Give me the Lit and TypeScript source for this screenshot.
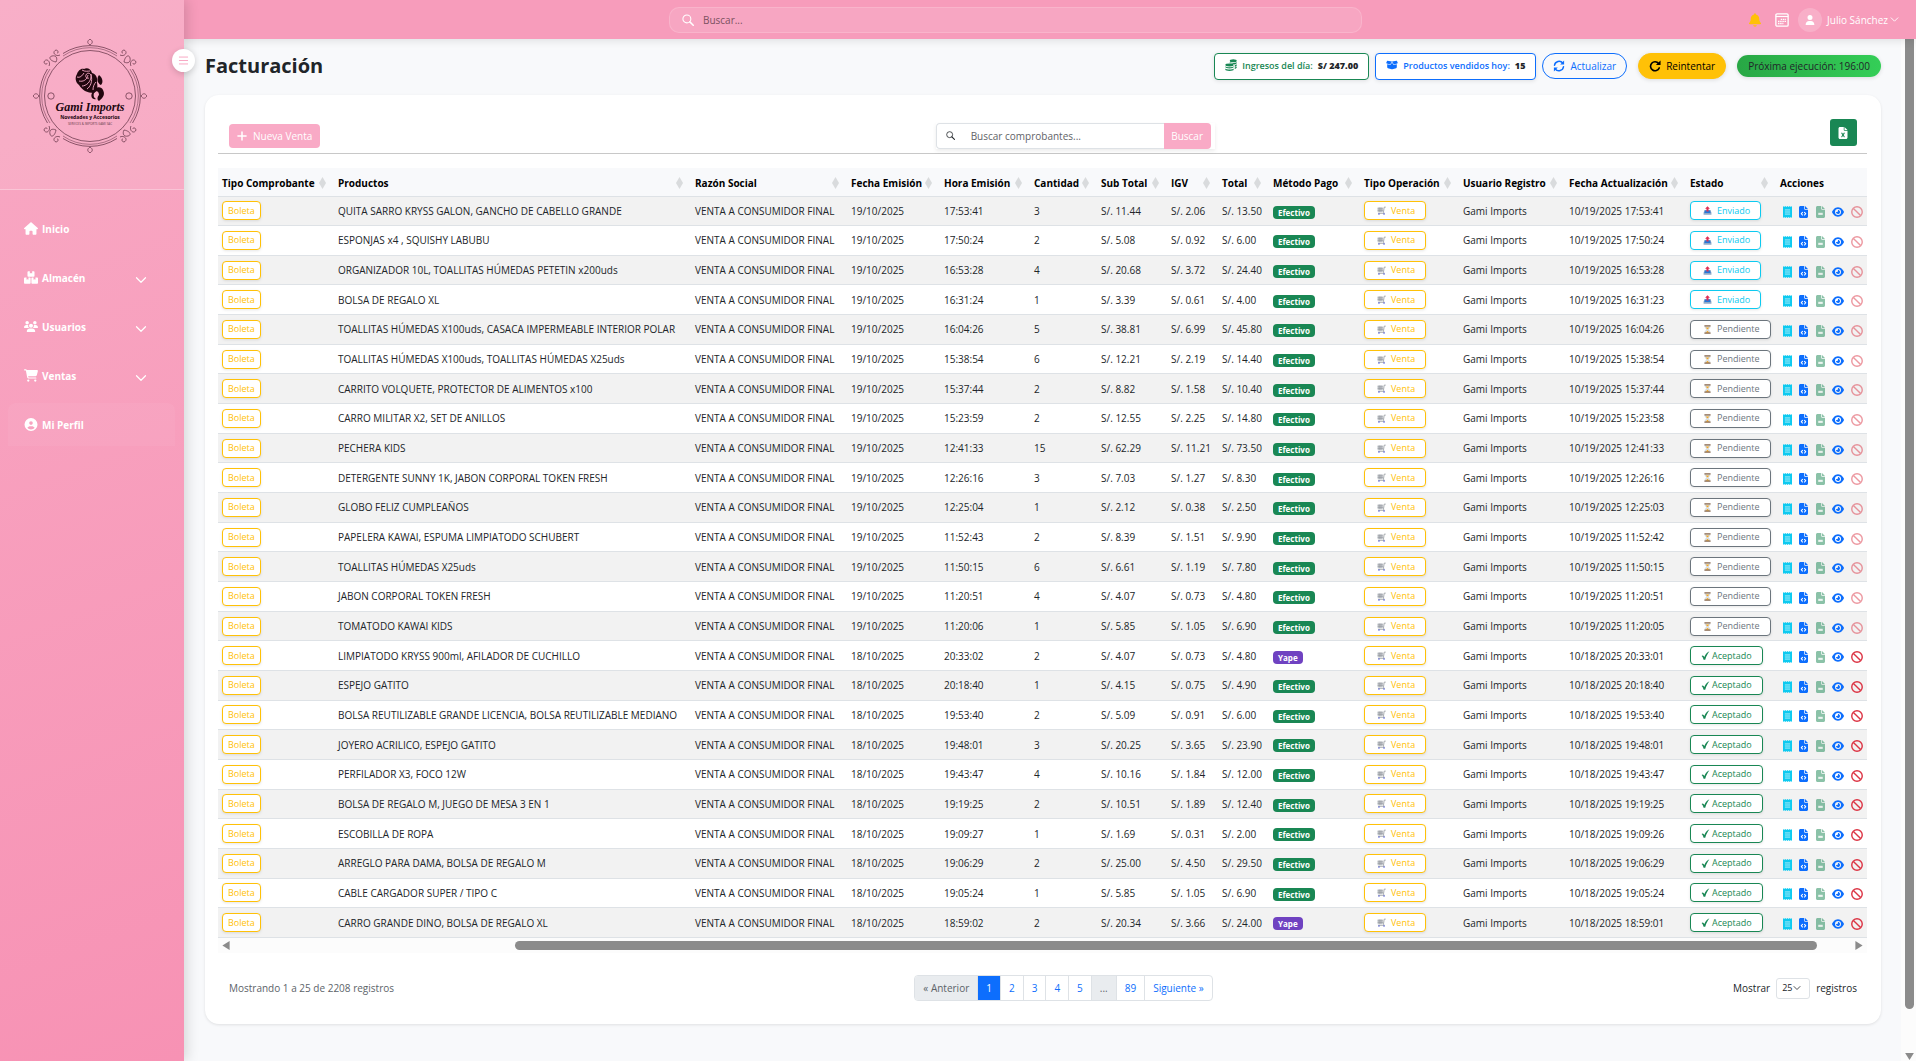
import { LitElement, html, css, svg, nothing, TemplateResult } from "lit";
import { customElement, property } from "lit/decorators.js";

type Estado = "Enviado" | "Pendiente" | "Aceptado";

interface Venta {
  productos: string;
  fecha: string;
  hora: string;
  cantidad: number;
  subTotal: string;
  igv: string;
  total: string;
  pago: "Efectivo" | "Yape";
  actualizado: string;
  estado: Estado;
}

const FILE =
  "M64 0C28.7 0 0 28.7 0 64V448c0 35.3 28.7 64 64 64H320c35.3 0 64-28.7 64-64V160H256c-17.7 0-32-14.3-32-32V0H64zM256 0V128H384L256 0z";

const ICONS: Record<string, { box: string; body: TemplateResult }> = {
  house: {
    box: "0 0 576 512",
    body: svg`<path d="M288 0c8 0 15 3 21 8l256 224c20 18 10 56-21 56h-32v184c0 22-18 40-40 40h-80c-22 0-40-18-40-40V384c0-18-14-32-32-32h-64c-18 0-32 14-32 32v88c0 22-18 40-40 40h-80c-22 0-40-18-40-40V288H32c-31 0-41-38-21-56L267 8c6-5 13-8 21-8z"/>`,
  },
  boxes: {
    box: "0 0 576 512",
    body: svg`<path d="M176 0h64v96l48-24 48 24V0h64c18 0 32 14 32 32v160c0 18-14 32-32 32H176c-18 0-32-14-32-32V32c0-18 14-32 32-32zM32 256h72v96l40-22 40 22v-96h56c18 0 32 14 32 32v192c0 18-14 32-32 32H32c-18 0-32-14-32-32V288c0-18 14-32 32-32zm304 0h56v96l40-22 40 22v-96h72c18 0 32 14 32 32v192c0 18-14 32-32 32H336c-18 0-32-14-32-32V288c0-18 14-32 32-32z"/>`,
  },
  users: {
    box: "0 0 640 512",
    body: svg`<circle cx="144" cy="80" r="80"/><circle cx="496" cy="80" r="80"/><circle cx="320" cy="224" r="92"/><path d="M0 299c0-59 48-107 107-107h43c16 0 31 4 45 10-12 44 1 88 36 118H21c-12 0-21-9-21-21zM409 320c34-29 48-74 36-118 14-6 29-10 45-10h43c59 0 107 48 107 107 0 12-9 21-21 21H409zM128 485c0-74 60-133 133-133h118c74 0 133 60 133 133 0 15-12 27-27 27H155c-15 0-27-12-27-27z"/>`,
  },
  cart: {
    box: "0 0 576 512",
    body: svg`<path d="M0 24C0 10.7 10.7 0 24 0L69.5 0c22 0 41.5 12.8 50.6 32l411 0c26.3 0 45.5 25 38.6 50.4l-41 152.3c-8.5 31.4-37 53.3-69.5 53.3l-288.5 0 5.4 28.5c2.2 11.3 12.1 19.5 23.6 19.5L488 336c13.3 0 24 10.7 24 24s-10.7 24-24 24l-288.3 0c-34.6 0-64.3-24.6-70.7-58.5L77.4 54.5c-.7-3.8-4-6.5-7.9-6.5L24 48C10.7 48 0 37.3 0 24zM128 464a48 48 0 1 1 96 0 48 48 0 1 1 -96 0zm336-48a48 48 0 1 1 0 96 48 48 0 1 1 0-96z"/>`,
  },
  profile: {
    box: "0 0 512 512",
    body: svg`<path d="M399 384.2C376.9 345.8 335.4 320 288 320H224c-47.4 0-88.9 25.8-111 64.2c35.2 39.2 86.2 63.8 143 63.8s107.8-24.7 143-63.8zM0 256a256 256 0 1 1 512 0A256 256 0 1 1 0 256zm256 16a72 72 0 1 0 0-144 72 72 0 1 0 0 144z"/>`,
  },
  chevron: {
    box: "0 0 16 16",
    body: svg`<path d="M2 5l6 6 6-6" fill="none" stroke="currentColor" stroke-width="1.6" stroke-linecap="round" stroke-linejoin="round"/>`,
  },
  menu: {
    box: "0 0 16 16",
    body: svg`<path d="M2 3h12M2 8h12M2 13h12" fill="none" stroke="currentColor" stroke-width="1.4" stroke-linecap="round"/>`,
  },
  search: {
    box: "0 0 16 16",
    body: svg`<circle cx="6.5" cy="6.5" r="5.3" fill="none" stroke="currentColor" stroke-width="1.4"/><path d="M10.5 10.5L15 15" fill="none" stroke="currentColor" stroke-width="2" stroke-linecap="round"/>`,
  },
  bell: {
    box: "0 0 448 512",
    body: svg`<path d="M224 0c-17.7 0-32 14.3-32 32v19.2C119 66 64 130.6 64 208v18.8c0 47-17.3 92.4-48.5 127.6l-7.4 8.3c-8.4 9.4-10.4 22.9-5.3 34.4S19.4 416 32 416H416c12.6 0 24-7.4 29.2-18.9s3.1-25-5.3-34.4l-7.4-8.3C401.3 319.2 384 273.9 384 226.8V208c0-77.4-55-142-128-156.8V32c0-17.7-14.3-32-32-32zm45.3 493.3c12-12 18.7-28.3 18.7-45.3H224 160c0 17 6.7 33.3 18.7 45.3s28.3 18.7 45.3 18.7s33.3-6.7 45.3-18.7z"/>`,
  },
  calendar: {
    box: "0 0 16 16",
    body: svg`<rect x="1" y="1" width="14" height="14" rx="1.4" fill="none" stroke="currentColor" stroke-width="1.5"/><path d="M1 4h14" stroke="currentColor" stroke-width="1.4"/><path d="M6.6 7.2h6M3.4 9.6h9.2M3.4 12h6.2" fill="none" stroke="currentColor" stroke-width="1.5" stroke-dasharray="1.7 .8"/>`,
  },
  user: {
    box: "0 0 448 512",
    body: svg`<path d="M224 256A128 128 0 1 0 224 0a128 128 0 1 0 0 256zm-45.7 48C79.8 304 0 383.8 0 482.3C0 498.7 13.3 512 29.7 512H418.3c16.4 0 29.7-13.3 29.7-29.7C448 383.8 368.2 304 269.7 304H178.3z"/>`,
  },
  coins: {
    box: "0 0 16 16",
    body: svg`<ellipse cx="11" cy="2.4" rx="4.6" ry="2"/><path d="M6.4 4c1 1.700 8 1.700 9.200 0v1.400c0 1-1.400 1.700-3 1.900C11.300 5.900 8.500 5.500 6.400 5.500zM13 8.200c1.200-.2 2.200-.6 2.600-1.200v1.500c0 .9-1.200 1.500-2.600 1.800zM13 11.200c1.200-.2 2.200-.6 2.600-1.200v1.400c0 .9-1.200 1.500-2.600 1.800z"/><ellipse cx="6" cy="8" rx="5.600" ry="1.900"/><path d="M.4 9.500c1.400 1.800 9.800 1.800 11.200 0v1.300c0 2.500-11.200 2.500-11.200 0zM.4 12.500c1.400 1.800 9.800 1.800 11.200 0v1.500c0 2.600-11.200 2.600-11.200 0z"/>`,
  },
  box: {
    box: "0 0 640 512",
    body: svg`<path d="M58.900 42.100c3-6.100 9.600-9.600 16.300-8.700L320 64 564.800 33.400c6.700-.8 13.300 2.700 16.300 8.700l41.700 83.400c9 17.900-.6 39.600-19.800 45.100L439.600 217.300c-13.900 4-28.800-1.900-36.200-14.300L320 64 236.600 203c-7.400 12.400-22.300 18.300-36.200 14.300L37.100 170.600c-19.300-5.500-28.800-27.200-19.800-45.100L58.900 42.100zM321.100 128l54.900 91.400c14.900 24.800 44.600 36.600 72.500 28.600L576 211.600v167c0 22-15 41.200-36.400 46.600l-204.100 51c-10.200 2.600-20.900 2.600-31 0l-204.100-51C79 419.700 64 400.500 64 378.500v-167L191.600 248c27.800 8 57.600-3.800 72.500-28.600L318.900 128h2.200z"/>`,
  },
  sync: {
    box: "0 0 16 16",
    body: svg`<path d="M2 7a6.200 6.200 0 0 1 11-3M14 9a6.200 6.200 0 0 1-11 3" fill="none" stroke="currentColor" stroke-width="2" stroke-linecap="round"/><path d="M14.800.8v5.200h-5.200zM1.200 15.200V10h5.200z"/>`,
  },
  redo: {
    box: "0 0 16 16",
    body: svg`<path d="M12.800 4.600A6 6 0 1 0 13.600 10.600" fill="none" stroke="currentColor" stroke-width="2.200" stroke-linecap="round"/><path d="M15.400.6v6.200H9.200z"/>`,
  },
  plus: {
    box: "0 0 16 16",
    body: svg`<path d="M8 1.500v13M1.500 8h13" stroke="currentColor" stroke-width="2.400" stroke-linecap="round"/>`,
  },
  excel: {
    box: "0 0 384 512",
    body: svg`<path d="${FILE}"/><path d="M140 260l104 156M244 260L140 416" stroke="#198754" stroke-width="44" stroke-linecap="round"/>`,
  },
  receipt: {
    box: "0 0 384 512",
    body: svg`<path d="M0 0l48 40L96 0l48 40L192 0l48 40L288 0l48 40L384 0v512l-48-40-48 40-48-40-48 40-48-40-48 40-48-40-48 40z"/><path d="M80 168h224M80 256h224M80 344h224" stroke="#fff" stroke-opacity=".8" stroke-width="34"/>`,
  },
  code: {
    box: "0 0 384 512",
    body: svg`<path d="${FILE}"/><path d="M150 270l-54 58 54 58M234 270l54 58-54 58" fill="none" stroke="#fff" stroke-width="44" stroke-linecap="round" stroke-linejoin="round"/>`,
  },
  doc: {
    box: "0 0 384 512",
    body: svg`<path d="${FILE}"/><path d="M96 290h192v90H96z" fill="#fff" fill-opacity=".85"/>`,
  },
  eye: {
    box: "0 0 576 512",
    body: svg`<path d="M288 32c-80.800 0-145.500 36.800-192.600 80.600C48.600 156 17.300 208 2.500 243.700c-3.300 7.900-3.300 16.700 0 24.600C17.300 304 48.600 356 95.400 399.400C142.500 443.200 207.200 480 288 480s145.500-36.800 192.600-80.600c46.800-43.500 78.100-95.400 93-131.100c3.300-7.900 3.300-16.700 0-24.600c-14.900-35.700-46.200-87.700-93-131.100C433.500 68.800 368.800 32 288 32zM144 256a144 144 0 1 1 288 0 144 144 0 1 1 -288 0zm144-64c0 35.300-28.700 64-64 64c-7.100 0-13.900-1.200-20.300-3.300c-5.500-1.800-11.900 1.600-11.700 7.400c.3 6.900 1.300 13.800 3.200 20.700c13.700 51.200 66.400 81.600 117.600 67.900s81.600-66.400 67.900-117.600c-11.100-41.500-47.800-69.400-88.600-71.100c-5.800-.2-9.200 6.100-7.400 11.700c2.100 6.400 3.300 13.200 3.300 20.300z"/>`,
  },
  ban: {
    box: "0 0 16 16",
    body: svg`<circle cx="8" cy="8" r="7" fill="none" stroke="currentColor" stroke-width="1.900"/><path d="M3.200 3.200l9.600 9.600" stroke="currentColor" stroke-width="1.900"/>`,
  },
  sort: { box: "0 0 7 12", body: svg`<path d="M3.500 0L7 6 3.500 12 0 6z"/>` },
  trolley: {
    box: "0 0 16 16",
    body: svg`<path d="M1 2.500h9.500v8.500H1z" fill="#c9cdd2"/><path d="M1 5h10M1 8h10M4 2.500V11M7 2.500V11" stroke="#8b9096" stroke-width=".9"/><path d="M15.500 2h-2.700L11.500 11l1.500 2H2" fill="none" stroke="#8b9096" stroke-width="1.300"/><circle cx="3.500" cy="14.300" r="1.400" fill="#4f5bd5"/><circle cx="12.500" cy="14.300" r="1.400" fill="#4f5bd5"/>`,
  },
  outbox: {
    box: "0 0 16 16",
    body: svg`<path d="M2.500 7h11l1.500 5v3.500H1V12z" fill="#8fa9c8"/><path d="M3.500 8h9l1 4.500h-11z" fill="#2577d8"/><path d="M8 .3l4.300 4.700h-2.500v4.700H6.200V5H3.700z" fill="#dd2e54"/>`,
  },
  hourglass: {
    box: "0 0 16 16",
    body: svg`<path d="M3.500 2h9c0 3-1.500 4.500-3.500 6 2 1.500 3.500 3 3.500 6h-9c0-3 1.500-4.500 3.500-6-2-1.500-3.500-3-3.500-6z" fill="#dfe6ea" stroke="#a9b3ba" stroke-width=".6"/><path d="M4.800 4.500h6.400L8 8zM4.500 13.800L8 10l3.500 3.800z" fill="#f5a623"/><path d="M2.500 1.500h11M2.500 14.500h11" stroke="#8a6a4f" stroke-width="2"/>`,
  },
  check: {
    box: "0 0 16 16",
    body: svg`<path d="M1 9c1.800-1.800 3.600-1 5 1.600C8 6 10.500 2.500 15 .6 12 4.500 9.500 9 7.500 15.400H4.600C3.800 12.500 2.800 10.500 1 9z"/>`,
  },
  left: { box: "0 0 8 10", body: svg`<path d="M8 0v10L0 5z"/>` },
  right: { box: "0 0 8 10", body: svg`<path d="M0 0v10l8-5z"/>` },
  down: { box: "0 0 10 8", body: svg`<path d="M0 0h10L5 8z"/>` },
};

const icon = (name: string, cls = "") =>
  html`<svg class="icon ${cls}" viewBox=${ICONS[name].box} aria-hidden="true">${ICONS[name].body}</svg>`;

const fila = (
  productos: string,
  fecha: string,
  hora: string,
  cantidad: number,
  subTotal: string,
  igv: string,
  total: string,
  segundos: string,
  estado: Estado,
  pago: "Efectivo" | "Yape" = "Efectivo"
): Venta => ({
  productos,
  fecha: `${fecha}/10/2025`,
  hora,
  cantidad,
  subTotal,
  igv,
  total,
  pago,
  actualizado: `10/${fecha}/2025 ${segundos}`,
  estado,
});

const VENTAS: Venta[] = [
  fila("QUITA SARRO KRYSS GALON, GANCHO DE CABELLO GRANDE", "19", "17:53:41", 3, "11.44", "2.06", "13.50", "17:53:41", "Enviado"),
  fila("ESPONJAS x4 , SQUISHY LABUBU", "19", "17:50:24", 2, "5.08", "0.92", "6.00", "17:50:24", "Enviado"),
  fila("ORGANIZADOR 10L, TOALLITAS HÚMEDAS PETETIN x200uds", "19", "16:53:28", 4, "20.68", "3.72", "24.40", "16:53:28", "Enviado"),
  fila("BOLSA DE REGALO XL", "19", "16:31:24", 1, "3.39", "0.61", "4.00", "16:31:23", "Enviado"),
  fila("TOALLITAS HÚMEDAS X100uds, CASACA IMPERMEABLE INTERIOR POLAR", "19", "16:04:26", 5, "38.81", "6.99", "45.80", "16:04:26", "Pendiente"),
  fila("TOALLITAS HÚMEDAS X100uds, TOALLITAS HÚMEDAS X25uds", "19", "15:38:54", 6, "12.21", "2.19", "14.40", "15:38:54", "Pendiente"),
  fila("CARRITO VOLQUETE, PROTECTOR DE ALIMENTOS x100", "19", "15:37:44", 2, "8.82", "1.58", "10.40", "15:37:44", "Pendiente"),
  fila("CARRO MILITAR X2, SET DE ANILLOS", "19", "15:23:59", 2, "12.55", "2.25", "14.80", "15:23:58", "Pendiente"),
  fila("PECHERA KIDS", "19", "12:41:33", 15, "62.29", "11.21", "73.50", "12:41:33", "Pendiente"),
  fila("DETERGENTE SUNNY 1K, JABON CORPORAL TOKEN FRESH", "19", "12:26:16", 3, "7.03", "1.27", "8.30", "12:26:16", "Pendiente"),
  fila("GLOBO FELIZ CUMPLEAÑOS", "19", "12:25:04", 1, "2.12", "0.38", "2.50", "12:25:03", "Pendiente"),
  fila("PAPELERA KAWAI, ESPUMA LIMPIATODO SCHUBERT", "19", "11:52:43", 2, "8.39", "1.51", "9.90", "11:52:42", "Pendiente"),
  fila("TOALLITAS HÚMEDAS X25uds", "19", "11:50:15", 6, "6.61", "1.19", "7.80", "11:50:15", "Pendiente"),
  fila("JABON CORPORAL TOKEN FRESH", "19", "11:20:51", 4, "4.07", "0.73", "4.80", "11:20:51", "Pendiente"),
  fila("TOMATODO KAWAI KIDS", "19", "11:20:06", 1, "5.85", "1.05", "6.90", "11:20:05", "Pendiente"),
  fila("LIMPIATODO KRYSS 900ml, AFILADOR DE CUCHILLO", "18", "20:33:02", 2, "4.07", "0.73", "4.80", "20:33:01", "Aceptado", "Yape"),
  fila("ESPEJO GATITO", "18", "20:18:40", 1, "4.15", "0.75", "4.90", "20:18:40", "Aceptado"),
  fila("BOLSA REUTILIZABLE GRANDE LICENCIA, BOLSA REUTILIZABLE MEDIANO", "18", "19:53:40", 2, "5.09", "0.91", "6.00", "19:53:40", "Aceptado"),
  fila("JOYERO ACRILICO, ESPEJO GATITO", "18", "19:48:01", 3, "20.25", "3.65", "23.90", "19:48:01", "Aceptado"),
  fila("PERFILADOR X3, FOCO 12W", "18", "19:43:47", 4, "10.16", "1.84", "12.00", "19:43:47", "Aceptado"),
  fila("BOLSA DE REGALO M, JUEGO DE MESA 3 EN 1", "18", "19:19:25", 2, "10.51", "1.89", "12.40", "19:19:25", "Aceptado"),
  fila("ESCOBILLA DE ROPA", "18", "19:09:27", 1, "1.69", "0.31", "2.00", "19:09:26", "Aceptado"),
  fila("ARREGLO PARA DAMA, BOLSA DE REGALO M", "18", "19:06:29", 2, "25.00", "4.50", "29.50", "19:06:29", "Aceptado"),
  fila("CABLE CARGADOR SUPER / TIPO C", "18", "19:05:24", 1, "5.85", "1.05", "6.90", "19:05:24", "Aceptado"),
  fila("CARRO GRANDE DINO, BOLSA DE REGALO XL", "18", "18:59:02", 2, "20.34", "3.66", "24.00", "18:59:01", "Aceptado", "Yape"),
];

const shared = css`
  :host {
    display: block;
    font-family: "Open Sans", "Noto Sans", sans-serif;
    font-size: 10px;
    line-height: 16px;
    color: #212529;
  }
  *,
  *::before,
  *::after {
    box-sizing: border-box;
  }
  button,
  input,
  select {
    font: inherit;
    margin: 0;
  }
  button {
    cursor: pointer;
  }
  a {
    text-decoration: none;
    color: inherit;
  }
  .icon {
    display: block;
    flex: none;
    fill: currentColor;
    width: 12px;
    height: 12px;
  }
`;

const MENU = [
  { texto: "Inicio", icono: "house", grupo: false },
  { texto: "Almacén", icono: "boxes", grupo: true },
  { texto: "Usuarios", icono: "users", grupo: true },
  { texto: "Ventas", icono: "cart", grupo: true },
  { texto: "Mi Perfil", icono: "profile", grupo: false },
];

@customElement("gami-logo")
class GamiLogo extends LitElement {
  static styles = css`
    :host {
      display: block;
    }
    .logo {
      display: block;
      width: 114px;
      height: 114px;
    }
    .line {
      fill: none;
      stroke: #5b2c3f;
      stroke-width: 0.7;
    }
    .fine {
      stroke-width: 0.6;
      opacity: 0.8;
    }
    .ink {
      fill: #22070f;
    }
    .petal {
      fill: none;
      stroke: #f9abc7;
      stroke-width: 0.9;
    }
    .script {
      font: italic 700 12px "Liberation Serif", serif;
    }
    .tag {
      font: 700 5px "Open Sans", sans-serif;
    }
    .small {
      font: 400 3px "Open Sans", sans-serif;
      opacity: 0.7;
    }
  `;

  render() {
    const corner = svg`<path class="line" d="M-30 41C-34 39-38 43-35 45.500C-33 47-30.500 44-33 42.500M-41 30C-39 34-43 38-45.500 35C-47 33-44 30.500-42.500 33M-34 34c-4-2-7 0-6 4s5 2 6-4"/>`;
    const tip = svg`<path class="line" d="M0-51c-3-2-3-4 0-6 3 2 3 4 0 6z"/>`;
    return html`<svg class="logo" viewBox="-57 -57 114 114" role="img">
      <circle class="line" r="45.500" />
      <path class="line fine" d="M-27 40A48 48 0 0 0 27 40M-27-40A48 48 0 0 1 27-40M40-27A48 48 0 0 1 40 27M-40-27A48 48 0 0 0-40 27" />
      <path class="line" d="M-27 42.500A50.300 50.300 0 0 0 27 42.500M-27-42.500A50.300 50.300 0 0 1 27-42.500M42.500-27A50.300 50.300 0 0 1 42.500 27M-42.500-27A50.300 50.300 0 0 0-42.500 27" />
      ${[0, 90, 180, 270].map((a) => svg`<g transform="rotate(${a})">${tip}${corner}</g>`)}
      <circle class="line" cx="-39" cy="0" r="3.200" />
      <circle class="line" cx="39" cy="0" r="3.200" />
      <g class="ink">
        <path d="M-13-22c-2 3-2 8 2 11 3 5 8 8 15 8 3-2 4-6 3-10 1-5-1-9-5-10-1-4-5-6-8-4-3-1-6 2-7 5z" />
        <path d="M9-21c3 2 5 7 2 10-3-1-5-6-2-10zM2-3c2-6 9-8 11-3 2 4 1 7-4 11-2-1-2-4 0-6 0-4-3-5-5-2-1 3 0 5 2 6-3 1-6-2-4-6z" />
      </g>
      <path class="petal" d="M-13-19c3 1 5-1 7-4M-11-15c4 1 8-1 9-6M-8-10c4 0 9-4 9-10 0-3-4-4-5-1-1 2 1 4 3 3M-3-7c3-2 6-7 4-15M-8-26c3 2 6 1 8 1M3-6c0-3 1-6 3-8" />
      <text class="ink script" x="0" y="15" text-anchor="middle">Gami Imports</text>
      <text class="ink tag" x="0" y="23" text-anchor="middle">Novedades y Accesorios</text>
      <text class="ink small" x="0" y="29" text-anchor="middle">SERVICES &amp; IMPORTS GAMI SAC</text>
    </svg>`;
  }
}

@customElement("app-sidebar")
class AppSidebar extends LitElement {
  static styles = [
    shared,
    css`
      :host {
        position: relative;
        z-index: 3;
        background: linear-gradient(160deg, #f8a9c4 0%, #f792b4 100%);
        box-shadow: 3px 0 12px rgba(0, 0, 0, 0.14);
      }
      .brand {
        display: flex;
        justify-content: center;
        padding: 39px 5px 36px 0;
        border-bottom: 1px solid rgba(255, 255, 255, 0.3);
        background: rgba(255, 255, 255, 0.08);
      }
      .toggle {
        position: absolute;
        top: 49px;
        right: -11px;
        width: 23px;
        height: 23px;
        padding: 0 0 1px;
        border: 0;
        border-radius: 50%;
        background: #fff;
        color: #f8a5c2;
        display: grid;
        place-items: center;
        box-shadow: 0 2px 6px rgba(0, 0, 0, 0.16);
      }
      .toggle .icon {
        width: 11px;
        height: 11px;
      }
      .menu {
        display: flex;
        flex-direction: column;
        gap: 6px;
        padding: 17px 9px 0 8px;
      }
      .item {
        display: flex;
        align-items: center;
        gap: 4px;
        height: 43px;
        padding: 0 28px 0 16px;
        border: 0;
        border-radius: 8px 8px 0 0;
        background: none;
        color: #fff;
        font-weight: 700;
        text-align: left;
      }
      .active {
        background: rgba(255, 255, 255, 0.05);
      }
      .item .glyph {
        width: 14px;
        height: 13px;
      }
      .label {
        flex: 1;
      }
      .item .arrow {
        width: 12px;
        height: 12px;
        margin-top: 5px;
      }
    `,
  ];

  render() {
    return html`
      <div class="brand"><gami-logo></gami-logo></div>
      <button class="toggle" aria-label="Menú">${icon("menu")}</button>
      <nav class="menu">
        ${MENU.map((m) =>
          m.grupo
            ? html`<button class="item">${icon(m.icono, "glyph")}<span class="label">${m.texto}</span>${icon("chevron", "arrow")}</button>`
            : html`<a class="item ${m.texto === "Mi Perfil" ? "active" : ""}" href="#">${icon(m.icono, "glyph")}<span class="label">${m.texto}</span></a>`
        )}
      </nav>
    `;
  }
}

@customElement("app-header")
class AppHeader extends LitElement {
  static styles = [
    shared,
    css`
      :host {
        position: relative;
        z-index: 2;
        display: grid;
        grid-template-columns: 28% 40% 1fr;
        align-items: center;
        height: 39px;
        background: #f79cbb;
        box-shadow: 0 2px 8px rgba(0, 0, 0, 0.1);
      }
      .search {
        grid-column: 2;
        display: flex;
        align-items: center;
        gap: 9px;
        height: 26px;
        padding: 0 12px;
        border: 1px solid rgba(255, 255, 255, 0.16);
        border-radius: 10px;
        background: rgba(255, 255, 255, 0.1);
        color: #fff;
      }
      .search input {
        flex: 1;
        min-width: 0;
        padding: 0;
        border: 0;
        outline: 0;
        background: none;
      }
      .search input::placeholder {
        color: #7b5060;
      }
      .tools {
        display: flex;
        align-items: center;
        justify-content: flex-end;
        padding-right: 17px;
        color: #fff;
      }
      .tool {
        display: flex;
        align-items: center;
        padding: 0;
        border: 0;
        background: none;
        color: inherit;
      }
      .bell {
        color: #ffc107;
        margin-right: 14px;
      }
      .bell .icon {
        height: 14px;
      }
      .cal {
        margin-right: 9px;
      }
      .cal .icon {
        width: 14px;
        height: 14px;
      }
      .avatar {
        display: grid;
        place-items: center;
        width: 24px;
        height: 24px;
        margin-right: 5px;
        border-radius: 50%;
        background: rgba(255, 255, 255, 0.2);
      }
      .avatar .icon {
        width: 10px;
        height: 10px;
      }
      .account {
        font-weight: 500;
      }
      .account .arrow {
        width: 9px;
        height: 9px;
        margin-left: 2px;
      }
    `,
  ];

  render() {
    return html`
      <label class="search">${icon("search")}<input type="search" placeholder="Buscar..." aria-label="Buscar" /></label>
      <div class="tools">
        <button class="tool bell" aria-label="Notificaciones">${icon("bell")}</button>
        <button class="tool cal" aria-label="Calendario">${icon("calendar")}</button>
        <button class="tool account"><span class="avatar">${icon("user")}</span>Julio Sánchez${icon("chevron", "arrow")}</button>
      </div>
    `;
  }
}

const COLUMNAS: { titulo: string; clase: string }[] = [
  { titulo: "Tipo Comprobante", clase: "w116" },
  { titulo: "Productos", clase: "" },
  { titulo: "Razón Social", clase: "w156" },
  { titulo: "Fecha Emisión", clase: "w93" },
  { titulo: "Hora Emisión", clase: "w90" },
  { titulo: "Cantidad", clase: "w67" },
  { titulo: "Sub Total", clase: "w70" },
  { titulo: "IGV", clase: "w51" },
  { titulo: "Total", clase: "w51" },
  { titulo: "Método Pago", clase: "w91" },
  { titulo: "Tipo Operación", clase: "w99" },
  { titulo: "Usuario Registro", clase: "w106" },
  { titulo: "Fecha Actualización", clase: "w121" },
  { titulo: "Estado", clase: "w90" },
  { titulo: "Acciones", clase: "w91" },
];

const ESTADO_ICONO: Record<Estado, string> = { Enviado: "outbox", Pendiente: "hourglass", Aceptado: "check" };

@customElement("ventas-table")
class VentasTable extends LitElement {
  @property({ attribute: false }) rows: Venta[] = [];

  static styles = [
    shared,
    css`
      .table {
        width: 100%;
        height: 770px;
        table-layout: fixed;
        border-collapse: collapse;
      }
      .w116 { width: 116px; }
      .w156 { width: 156px; }
      .w93 { width: 93px; }
      .w90 { width: 90px; }
      .w67 { width: 67px; }
      .w70 { width: 70px; }
      .w51 { width: 51px; }
      .w91 { width: 91px; }
      .w99 { width: 99px; }
      .w106 { width: 106px; }
      .w121 { width: 121px; }
      th {
        height: 28px;
        padding: 2px 8px 0 4px;
        border-bottom: 1px solid #dee2e6;
        background: #f8f9fb;
        color: #000;
        font-weight: 700;
        text-align: left;
      }
      .head {
        display: flex;
        align-items: center;
        justify-content: space-between;
        white-space: nowrap;
      }
      .head .icon {
        width: 7px;
        height: 12px;
        color: #d9dbdd;
      }
      td {
        padding: 0 0 0 4px;
        border-bottom: 1px solid #dee2e6;
        white-space: nowrap;
        color: #212529;
      }
      tbody tr:nth-child(odd) {
        background: #f2f2f2;
      }
      .pill {
        display: inline-flex;
        vertical-align: middle;
        align-items: center;
        gap: 5px;
        height: 19px;
        padding: 0 10px 0 12px;
        border: 1px solid currentColor;
        border-radius: 4px;
        background: #fff;
        font-size: 9px;
        font-weight: 500;
        box-shadow: 0 1px 3px rgba(0, 0, 0, 0.1);
      }
      .pill .icon {
        width: 9px;
        height: 9px;
      }
      .boleta,
      .venta {
        color: #ffc107;
      }
      .boleta {
        padding: 0 5px;
      }
      .Enviado {
        color: #0dcaf0;
      }
      .Pendiente {
        color: #6c757d;
      }
      .Aceptado {
        color: #198754;
        padding: 0 10px;
        gap: 2px;
      }
      .badge {
        display: inline-block;
        vertical-align: middle;
        height: 13px;
        padding: 0 5px;
        border-radius: 4px;
        background: #198754;
        color: #fff;
        font-size: 8px;
        line-height: 13px;
        font-weight: 700;
      }
      .Yape {
        background: #6f42c1;
      }
      .actions {
        display: flex;
        align-items: center;
        justify-content: space-between;
        padding: 3px 4px 0 3px;
      }
      .act {
        padding: 0;
        border: 0;
        background: none;
      }
      .act .narrow {
        width: 9px;
      }
      .cyan { color: #0dcaf0; }
      .blue { color: #0d6efd; }
      .green { color: #198754; opacity: 0.5; }
      .red { color: #dc3545; }
      .off { opacity: 0.5; }
    `,
  ];

  render() {
    return html`
      <table class="table">
        <colgroup>${COLUMNAS.map((c) => html`<col class=${c.clase} />`)}</colgroup>
        <thead>
          <tr>
            ${COLUMNAS.map(
              (c) => html`<th scope="col"><span class="head">${c.titulo}${c.titulo === "Acciones" ? nothing : icon("sort")}</span></th>`
            )}
          </tr>
        </thead>
        <tbody>
          ${this.rows.map(
            (r) => html`<tr>
              <td><span class="pill boleta">Boleta</span></td>
              <td>${r.productos}</td>
              <td>VENTA A CONSUMIDOR FINAL</td>
              <td>${r.fecha}</td>
              <td>${r.hora}</td>
              <td>${r.cantidad}</td>
              <td>S/. ${r.subTotal}</td>
              <td>S/. ${r.igv}</td>
              <td>S/. ${r.total}</td>
              <td><span class="badge ${r.pago}">${r.pago}</span></td>
              <td><span class="pill venta">${icon("trolley")}Venta</span></td>
              <td>Gami Imports</td>
              <td>${r.actualizado}</td>
              <td><span class="pill ${r.estado}">${icon(ESTADO_ICONO[r.estado])}${r.estado}</span></td>
              <td>
                <div class="actions">
                  <button class="act cyan" aria-label="Comprobante">${icon("receipt", "narrow")}</button>
                  <button class="act blue" aria-label="XML">${icon("code", "narrow")}</button>
                  <button class="act green" aria-label="CDR">${icon("doc", "narrow")}</button>
                  <button class="act blue" aria-label="Ver">${icon("eye")}</button>
                  <button class="act red ${r.estado === "Aceptado" ? "" : "off"}" aria-label="Anular">${icon("ban")}</button>
                </div>
              </td>
            </tr>`
          )}
        </tbody>
      </table>
    `;
  }
}

@customElement("app-root")
class AppRoot extends LitElement {
  static styles = [
    shared,
    css`
      .shell {
        display: grid;
        grid-template-columns: 184px minmax(0, 1fr);
        min-height: 100vh;
        background: #f8f9fb;
      }
      .main {
        display: flex;
        flex-direction: column;
      }
      .body {
        flex: 1;
        display: flex;
      }
      .content {
        flex: 1;
        min-width: 0;
        padding: 0 20px 0 21px;
      }
      .vbar {
        display: flex;
        flex-direction: column;
        align-items: center;
        gap: 44px;
        width: 15px;
        padding: 0 0 1px 2px;
        background: #fcfcfc;
        color: #8b8b8b;
      }
      .vthumb {
        flex: 1;
        width: 9px;
        border-radius: 0 0 5px 5px;
        background: #8b8b8b;
      }
      .vbar .icon {
        width: 9px;
        height: 7px;
      }
      .top {
        display: flex;
        align-items: center;
        height: 56px;
        padding-bottom: 2px;
      }
      .title {
        flex: 1;
        margin: 0;
        font-size: 20px;
        line-height: 26px;
        font-weight: 700;
      }
      .stat {
        display: flex;
        align-items: center;
        gap: 5px;
        height: 27px;
        padding: 0 10px;
        border: 1px solid currentColor;
        border-radius: 4px;
        background: #fff;
        font-size: 9px;
        font-weight: 600;
        box-shadow: 0 1px 4px rgba(0, 0, 0, 0.1);
        margin-right: 6px;
      }
      .stat b {
        color: #212529;
      }
      .stat .icon {
        margin-bottom: 2px;
      }
      .income {
        color: #198754;
      }
      .sold {
        color: #0d6efd;
      }
      .round {
        display: flex;
        align-items: center;
        gap: 5px;
        height: 26px;
        padding: 0 10px;
        border: 1px solid #0d6efd;
        border-radius: 13px;
        background: #f8f9fb;
        color: #0d6efd;
        margin-right: 11px;
      }
      .retry {
        border-color: #ffc107;
        background: #ffc107;
        color: #000;
        box-shadow: 0 1px 4px rgba(0, 0, 0, 0.12);
      }
      .next {
        height: 22px;
        padding: 0 11px;
        border-radius: 11px;
        line-height: 22px;
        background: linear-gradient(90deg, #28a745, #34ce57);
        box-shadow: 0 1px 4px rgba(0, 0, 0, 0.12);
      }
      .card {
        padding: 24px 14px 23px 13px;
        border-radius: 14px;
        background: #fff;
        box-shadow: 0 1px 3px rgba(0, 0, 0, 0.1);
      }
      .bar {
        display: flex;
        justify-content: space-between;
        align-items: center;
        height: 35px;
        padding: 0 10px 4px 11px;
        border-bottom: 1px solid #c8c8c8;
        margin-bottom: 14px;
      }
      .new {
        display: flex;
        align-items: center;
        gap: 6px;
        height: 24px;
        margin-top: 3px;
        padding: 0 8px;
        border: 0;
        border-radius: 4px;
        background: #f9aac6;
        color: #fff;
      }
      .new .icon {
        width: 10px;
        height: 10px;
      }
      .find {
        display: flex;
        height: 26px;
        margin-top: 3px;
        padding-right: 4px;
        box-shadow: 0 2px 4px rgba(0, 0, 0, 0.08);
      }
      .find .field {
        display: flex;
        align-items: center;
        gap: 16px;
        width: 228px;
        padding: 0 9px;
        border: 1px solid #dee2e6;
        border-right: 0;
        border-radius: 4px 0 0 4px;
      }
      .find .icon {
        width: 9px;
        height: 9px;
      }
      .find input {
        flex: 1;
        min-width: 0;
        padding: 0;
        border: 0;
        outline: 0;
        background: none;
      }
      .find input::placeholder {
        color: #5f6368;
      }
      .find button {
        width: 47px;
        padding: 0;
        border: 0;
        border-radius: 0 4px 4px 0;
        background: #f9aac6;
        color: #fff;
      }
      .xls {
        display: grid;
        place-items: center;
        width: 27px;
        height: 27px;
        margin-top: -3px;
        padding: 0;
        border: 0;
        border-radius: 3px;
        background: #198754;
        color: #fff;
      }
      .hbar {
        display: flex;
        align-items: center;
        height: 15px;
        padding: 0 4px;
        background: #fcfcfc;
        color: #8b8b8b;
      }
      .hbar .icon {
        width: 8px;
        height: 9px;
      }
      .htrack {
        flex: 1;
        padding: 0 38px 0 285px;
      }
      .hthumb {
        height: 9px;
        border-radius: 5px;
        background: #8b8b8b;
      }
      .foot {
        display: flex;
        justify-content: space-between;
        align-items: center;
        margin-top: 22px;
        padding: 0 10px 0 11px;
      }
      .count {
        color: #5c6369;
      }
      .pages {
        display: flex;
        margin: 0;
        padding: 0;
        list-style: none;
        border: 1px solid #dee2e6;
        border-radius: 4px;
        overflow: hidden;
      }
      .pages li + li {
        border-left: 1px solid #dee2e6;
      }
      .page {
        display: block;
        padding: 0 8px;
        line-height: 24px;
        color: #0d6efd;
      }
      .muted {
        background: #e9ecef;
        color: #5c6369;
      }
      .current {
        background: #0d6efd;
        color: #fff;
      }
      .size {
        display: flex;
        align-items: center;
        gap: 6px;
      }
      .pick {
        display: grid;
        align-items: center;
      }
      .pick > * {
        grid-area: 1 / 1;
      }
      .pick select {
        appearance: none;
        width: 34px;
        height: 21px;
        padding: 0 0 0 5px;
        border: 1px solid #dee2e6;
        border-radius: 3px;
        background: #fff;
        color: #212529;
        font-size: 9px;
      }
      .pick .icon {
        justify-self: end;
        width: 8px;
        height: 8px;
        margin-right: 9px;
        pointer-events: none;
      }
    `,
  ];

  render() {
    return html`
      <div class="shell">
        <app-sidebar></app-sidebar>
        <div class="main">
          <app-header></app-header>
          <div class="body">
            <main class="content">
              <div class="top">
                <h1 class="title">Facturación</h1>
                <div class="stat income">${icon("coins")}Ingresos del día: <b>S/ 247.00</b></div>
                <div class="stat sold">${icon("box")}Productos vendidos hoy: <b>15</b></div>
                <button class="round">${icon("sync")}Actualizar</button>
                <button class="round retry">${icon("redo")}Reintentar</button>
                <div class="next">Próxima ejecución: 196:00</div>
              </div>
              <section class="card">
                <div class="bar">
                  <button class="new">${icon("plus")}Nueva Venta</button>
                  <form class="find">
                    <label class="field">${icon("search")}<input type="text" placeholder="Buscar comprobantes..." aria-label="Buscar comprobantes" /></label>
                    <button type="button">Buscar</button>
                  </form>
                  <button class="xls" aria-label="Excel">${icon("excel")}</button>
                </div>
                <ventas-table .rows=${VENTAS}></ventas-table>
                <div class="hbar" aria-hidden="true">
                  ${icon("left")}
                  <div class="htrack"><div class="hthumb"></div></div>
                  ${icon("right")}
                </div>
                <div class="foot">
                  <span class="count">Mostrando 1 a 25 de 2208 registros</span>
                  <ul class="pages">
                    <li><a class="page muted" href="#">« Anterior</a></li>
                    <li><a class="page current" href="#">1</a></li>
                    ${[2, 3, 4, 5].map((n) => html`<li><a class="page" href="#">${n}</a></li>`)}
                    <li><span class="page muted">...</span></li>
                    <li><a class="page" href="#">89</a></li>
                    <li><a class="page" href="#">Siguiente »</a></li>
                  </ul>
                  <div class="size">
                    <label for="size">Mostrar</label>
                    <span class="pick">
                      <select id="size"><option>25</option><option>50</option></select>
                      ${icon("chevron")}
                    </span>
                    <span>registros</span>
                  </div>
                </div>
              </section>
            </main>
            <div class="vbar" aria-hidden="true">
              <div class="vthumb"></div>
              ${icon("down")}
            </div>
          </div>
        </div>
      </div>
    `;
  }
}
